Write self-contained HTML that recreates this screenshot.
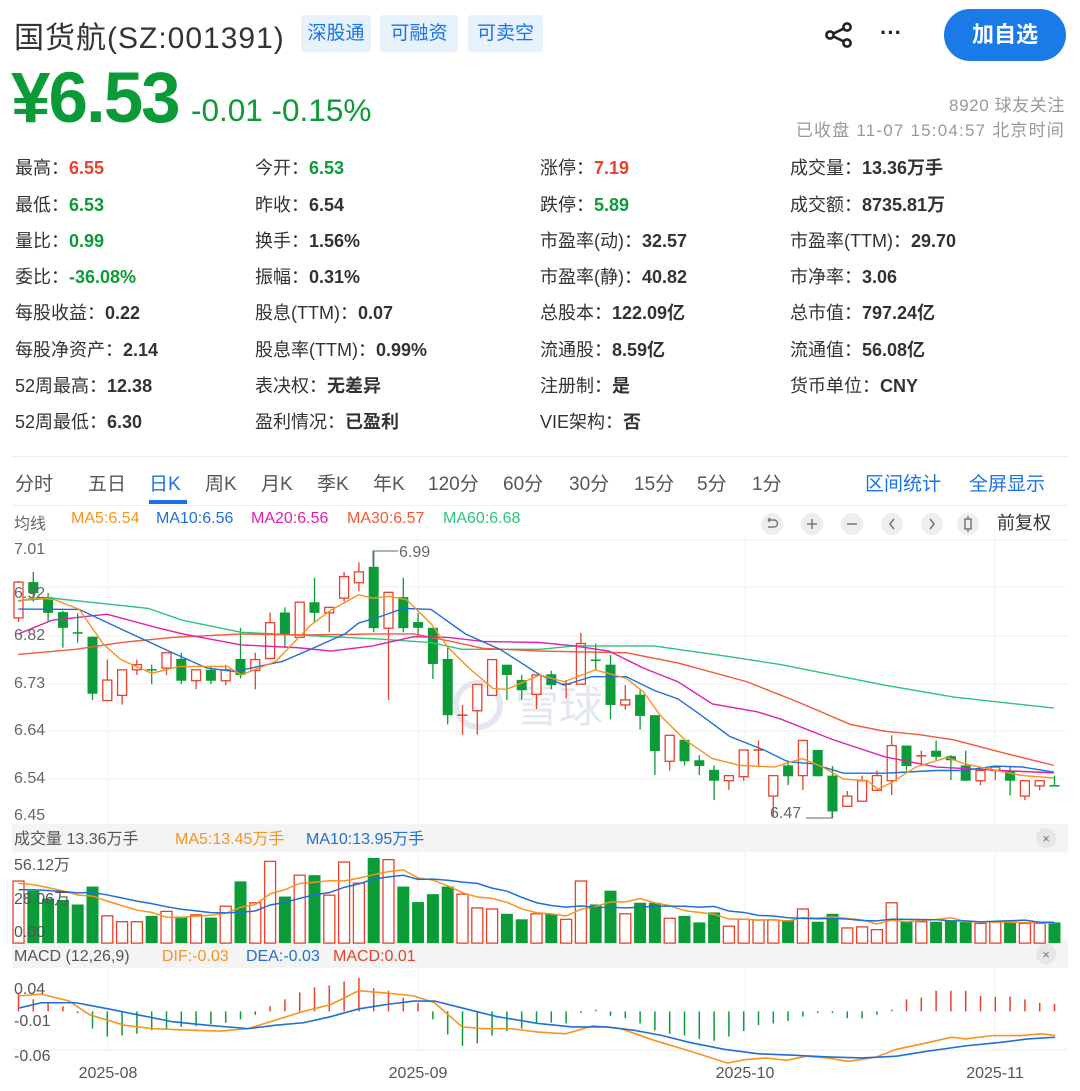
<!DOCTYPE html>
<html><head><meta charset="utf-8">
<style>
*{margin:0;padding:0;box-sizing:border-box}
body{width:1080px;height:1091px;background:#fff;font-family:"Liberation Sans","Noto Sans CJK SC",sans-serif;color:#333;position:relative;overflow:hidden}
.a{position:absolute;white-space:nowrap}
.tag{position:absolute;top:15px;height:37px;background:#e8f2fd;color:#1a73e8;font-size:19px;line-height:37px;text-align:center;border-radius:3px}
.st{position:absolute;font-size:18px;line-height:22px;white-space:nowrap}
.st b{font-weight:bold}
.r{color:#e8412c}.g{color:#0b9b37}
.tab{position:absolute;top:469px;font-size:19px;color:#555}
.leg{position:absolute;top:510px;font-size:16px}
</style></head><body>
<div class="a" style="left:14px;top:13px;font-size:30px;letter-spacing:1px;color:#333">国货航(SZ:001391)</div>
<div class="tag" style="left:301px;width:70px">深股通</div>
<div class="tag" style="left:380px;width:78px">可融资</div>
<div class="tag" style="left:468px;width:75px">可卖空</div>
<svg class="a" style="left:822px;top:20px" width="34" height="30" viewBox="0 0 34 30"><g fill="none" stroke="#222" stroke-width="2.6"><circle cx="25" cy="7" r="3.6"/><circle cx="8" cy="15" r="3.6"/><circle cx="25" cy="23" r="3.6"/><path d="M11.5 13.5 21.5 8.7M11.5 16.5 21.5 21.3"/></g></svg>
<div class="a" style="left:880px;top:20px;font-size:22px;font-weight:bold;color:#222">···</div>
<div class="a" style="left:944px;top:9px;width:122px;height:52px;border-radius:26px;background:#1a7ae8;color:#fff;font-size:22px;font-weight:bold;text-align:center;line-height:52px">加自选</div>
<div class="a" style="left:11px;top:58px;font-size:71px;font-weight:bold;color:#0a9a38;letter-spacing:-2px">¥6.53</div>
<div class="a" style="left:191px;top:92px;font-size:31.5px;color:#0a9a38">-0.01 -0.15%</div>
<div class="a" style="right:15px;top:91px;font-size:17px;letter-spacing:0.6px;color:#999;text-align:right">8920 球友关注</div>
<div class="a" style="right:15px;top:116px;font-size:17px;letter-spacing:1.2px;color:#999;text-align:right">已收盘 11-07 15:04:57 北京时间</div>

<div class="st" style="left:15px;top:157px">最高：<b class="r">6.55</b></div>
<div class="st" style="left:255px;top:157px">今开：<b class="g">6.53</b></div>
<div class="st" style="left:540px;top:157px">涨停：<b class="r">7.19</b></div>
<div class="st" style="left:790px;top:157px">成交量：<b>13.36万手</b></div>
<div class="st" style="left:15px;top:194px">最低：<b class="g">6.53</b></div>
<div class="st" style="left:255px;top:194px">昨收：<b>6.54</b></div>
<div class="st" style="left:540px;top:194px">跌停：<b class="g">5.89</b></div>
<div class="st" style="left:790px;top:194px">成交额：<b>8735.81万</b></div>
<div class="st" style="left:15px;top:230px">量比：<b class="g">0.99</b></div>
<div class="st" style="left:255px;top:230px">换手：<b>1.56%</b></div>
<div class="st" style="left:540px;top:230px">市盈率(动)：<b>32.57</b></div>
<div class="st" style="left:790px;top:230px">市盈率(TTM)：<b>29.70</b></div>
<div class="st" style="left:15px;top:266px">委比：<b class="g">-36.08%</b></div>
<div class="st" style="left:255px;top:266px">振幅：<b>0.31%</b></div>
<div class="st" style="left:540px;top:266px">市盈率(静)：<b>40.82</b></div>
<div class="st" style="left:790px;top:266px">市净率：<b>3.06</b></div>
<div class="st" style="left:15px;top:302px">每股收益：<b>0.22</b></div>
<div class="st" style="left:255px;top:302px">股息(TTM)：<b>0.07</b></div>
<div class="st" style="left:540px;top:302px">总股本：<b>122.09亿</b></div>
<div class="st" style="left:790px;top:302px">总市值：<b>797.24亿</b></div>
<div class="st" style="left:15px;top:339px">每股净资产：<b>2.14</b></div>
<div class="st" style="left:255px;top:339px">股息率(TTM)：<b>0.99%</b></div>
<div class="st" style="left:540px;top:339px">流通股：<b>8.59亿</b></div>
<div class="st" style="left:790px;top:339px">流通值：<b>56.08亿</b></div>
<div class="st" style="left:15px;top:375px">52周最高：<b>12.38</b></div>
<div class="st" style="left:255px;top:375px">表决权：<b>无差异</b></div>
<div class="st" style="left:540px;top:375px">注册制：<b>是</b></div>
<div class="st" style="left:790px;top:375px">货币单位：<b>CNY</b></div>
<div class="st" style="left:15px;top:411px">52周最低：<b>6.30</b></div>
<div class="st" style="left:255px;top:411px">盈利情况：<b>已盈利</b></div>
<div class="st" style="left:540px;top:411px">VIE架构：<b>否</b></div>

<div class="a" style="left:12px;top:456px;width:1056px;height:50px;border-top:1px solid #eee;border-bottom:1px solid #eee"></div>
<div class="tab" style="left:15px">分时</div>
<div class="tab" style="left:88px">五日</div>
<div class="tab" style="left:149px;color:#1a73e8">日K</div>
<div class="a" style="left:149px;top:500px;width:38px;height:4px;background:#1a73e8"></div>
<div class="tab" style="left:205px">周K</div>
<div class="tab" style="left:261px">月K</div>
<div class="tab" style="left:317px">季K</div>
<div class="tab" style="left:373px">年K</div>
<div class="tab" style="left:428px">120分</div>
<div class="tab" style="left:503px">60分</div>
<div class="tab" style="left:569px">30分</div>
<div class="tab" style="left:634px">15分</div>
<div class="tab" style="left:697px">5分</div>
<div class="tab" style="left:752px">1分</div>
<div class="tab" style="left:865px;color:#1a73e8">区间统计</div>
<div class="tab" style="left:969px;color:#1a73e8">全屏显示</div>

<div class="leg" style="left:14px;color:#666">均线</div>
<div class="leg" style="left:71px;color:#f7931e">MA5:6.54</div>
<div class="leg" style="left:156px;color:#1f6fd6">MA10:6.56</div>
<div class="leg" style="left:251px;color:#e020b0">MA20:6.56</div>
<div class="leg" style="left:347px;color:#f25a3a">MA30:6.57</div>
<div class="leg" style="left:443px;color:#2ec47a">MA60:6.68</div>
<svg class="a" style="left:755px;top:510px" width="230" height="28">
<g fill="#eee"><circle cx="17" cy="14" r="11"/><circle cx="57" cy="14" r="11"/><circle cx="97" cy="14" r="11"/><circle cx="137" cy="14" r="11"/><circle cx="177" cy="14" r="11"/><circle cx="213" cy="14" r="11"/></g>
<g fill="none" stroke="#777" stroke-width="1.5"><path d="M13 10h6a3 3 0 0 1 0 7h-6M13 10l2-2M13 10l2 2"/><path d="M52 14h10M57 9v10"/><path d="M92 14h10"/><path d="M139 9l-4 5 4 5"/><path d="M175 9l4 5-4 5"/><rect x="210" y="9" width="6" height="10"/><path d="M213 6v3M213 19v3"/></g></svg>
<div class="leg" style="left:997px;top:509px;font-size:18px;color:#333">前复权</div>

<svg id="ch" class="a" style="left:0;top:0" width="1080" height="1091"></svg>
<script>
var NS="http://www.w3.org/2000/svg",S=document.getElementById('ch');
function el(t,a,txt){var e=document.createElementNS(NS,t);for(var k in a)e.setAttribute(k,a[k]);if(txt)e.textContent=txt;S.appendChild(e);return e;}
var R='#e8412c',G='#0b9b37';
[540,587,636,684,731,779,826].forEach(function(y){el('line',{x1:12,x2:1068,y1:y,y2:y,stroke:'#f0f0f0'})});
[108,418,745,995].forEach(function(x){el('line',{x1:x,x2:x,y1:538,y2:1050,stroke:'#f0f0f0'})});
el('line',{x1:12,x2:1068,y1:1050,y2:1050,stroke:'#eee'});
el('rect',{x:12,y:824,width:1056,height:28,fill:'#f4f4f4'});
el('rect',{x:12,y:940,width:1056,height:28,fill:'#f4f4f4'});
el('circle',{cx:478,cy:705,r:22,fill:'none',stroke:'#e3e8f0','stroke-width':6});
el('text',{x:515,y:722,'font-size':44,fill:'#e3e8f0','font-family':'Noto Sans CJK SC'},'雪球');
var C=[[138,243,135,255,1],[138,170,108,195,0],[182,228,170,255,0],[226,272,222,330,0],[287,287,230,315,0],[298,465,298,483,0],[425,485,365,485,1],[395,470,395,497,1],[380,395,365,410,1],[395,395,380,437,0],[345,390,345,410,1],[363,427,345,437,0],[395,427,395,452,1],[395,427,385,437,0],[395,427,380,440,1],[363,410,272,420,0],[365,397,345,452,1],[257,362,227,362,1],[227,290,212,330,0],[197,300,197,300,1],[197,228,125,255,0],[212,228,212,285,1],[122,185,108,195,1],[108,140,80,165,1],[93,273,48,285,0],[168,273,168,483,1],[182,273,125,285,0],[255,272,228,300,0],[272,378,272,422,0],[363,528,330,555,0],[528,528,498,585,1],[438,515,438,585,1],[365,470,365,470,1],[380,410,380,483,0],[425,455,410,483,0],[410,467,410,510,1],
[408,440,398,452,0],[437,437,425,478,1],[318,437,287,437,1],[367,367,318,397,0],[380,498,352,540,0],[483,498,440,512,1],[468,530,455,570,0],[528,633,528,703,0],[587,663,587,690,1],[600,663,600,675,0],[660,677,645,703,0],[688,720,675,777,0],[705,720,705,747,1],[630,708,630,720,1],[630,630,602,675,1],[705,765,705,825,1],[675,707,660,733,0],[602,705,602,747,1],[630,707,630,707,0],[705,810,677,830,0],[765,795,750,795,1],[720,780,705,780,1],[705,748,690,748,1],[617,720,587,762,1],[617,677,617,690,0],[647,647,632,675,1],[632,650,602,660,0],[648,660,645,718,0],[675,720,632,720,0],[690,720,690,733,1],[680,690,677,718,1],[690,720,677,763,0],[720,765,720,777,1],[720,735,720,748,1],[735,735,705,735,0]];
function cx(i){return 18.5+i*14.8}
function py(z){return 535+z/2.93}
C.forEach(function(c,i){var x=cx(i),col=c[4]?R:G;
 el('line',{x1:x,x2:x,y1:py(c[2]),y2:py(c[3]),stroke:col,'stroke-width':1.3});
 var t=py(c[0]),b=py(c[1]);
 if(b-t<1.5){el('line',{x1:x-5,x2:x+5,y1:t,y2:t,stroke:col,'stroke-width':1.5});}
 else if(c[4])el('rect',{x:x-4.5,y:t,width:9,height:b-t,fill:'#fff',stroke:col,'stroke-width':1.3});
 else el('rect',{x:x-5,y:t,width:10,height:b-t,fill:col});
});
function pl(pts,col,fx,fy,w){el('polyline',{points:pts.map(function(p){return fx(p[0])+','+fy(p[1])}).join(' '),fill:'none',stroke:col,'stroke-width':w||1.4});}
function z4x(x){return x/2.9}
function z5x(x){return 540+x/2.9}
function both(a,b,col){pl(a,col,z4x,py);pl(b,col,z5x,py);}
both([[53,192],[150,185],[430,215],[530,250],[700,285],[900,295],[1100,305],[1250,315],[1340,335],[1566,335]],[[0,335],[100,325],[330,325],[540,355],[700,380],[800,400],[1000,440],[1200,475],[1490,507]],'#2ec47a');
both([[53,350],[220,335],[350,315],[500,300],[700,290],[900,293],[1100,290],[1200,290],[1300,310],[1400,332],[1566,340]],[[0,340],[250,345],[400,375],[600,430],[750,490],[900,555],[1000,575],[1100,585],[1200,600],[1350,640],[1490,675]],'#f25a3a');
both([[53,290],[150,250],[310,232],[450,270],[530,290],[700,322],[860,330],[960,340],[1080,325],[1200,298],[1300,300],[1400,312],[1566,315]],[[0,315],[100,325],[200,340],[300,390],[400,430],[500,495],[630,518],[700,540],[850,600],[1000,650],[1150,680],[1300,688],[1490,697]],'#e020b0');
both([[53,217],[230,218],[350,275],[500,345],[600,390],[680,400],[820,370],[900,335],[1000,290],[1040,258],[1100,240],[1170,215],[1250,218],[1350,290],[1450,335],[1566,410]],[[0,410],[70,440],[150,415],[250,415],[330,455],[400,480],[470,530],[550,590],[650,630],[720,665],[790,670],[880,698],[1000,698],[1150,690],[1230,690],[1320,677],[1400,680],[1490,695]],'#1f6fd6');
both([[53,195],[100,183],[160,190],[230,218],[300,320],[350,365],[440,405],[520,385],[660,385],[700,410],[800,370],[900,265],[960,220],[1040,175],[1080,185],[1130,180],[1180,190],[1250,260],[1300,330],[1360,390],[1430,450],[1470,452],[1566,410]],[[0,410],[70,430],[160,395],[250,420],[300,460],[350,530],[420,600],[500,655],[580,675],[680,680],[760,655],[820,680],[880,715],[950,720],[980,745],[1020,725],[1090,680],[1180,652],[1230,670],[1300,685],[1400,705],[1490,712]],'#f7931e');
var lab=[['7.01',554],['6.82',597],['6.82',640],['6.73',688],['6.64',735],['6.54',783],['6.45',820]];
lab.forEach(function(l,i){if(i==1)return;el('text',{x:14,y:l[1],'font-size':16,fill:'#666'},l[0])});
el('text',{x:14,y:598,'font-size':16,fill:'#666'},'6.92');
el('path',{d:'M373 566V551H398',fill:'none',stroke:'#666'});
el('text',{x:399,y:557,'font-size':16,fill:'#666'},'6.99');
el('path',{d:'M832 810V818H806',fill:'none',stroke:'#666'});
el('text',{x:770,y:818,'font-size':16,fill:'#666'},'6.47');
var V=[177,205,228,232,245,193,278,295,295,278,265,280,275,283,250,178,240,120,222,160,160,218,122,183,110,115,193,238,215,193,215,255,258,272,288,272,272,288,177,245,205,272,240,240,285,278,297,268,308,288,290,290,290,258,295,272,313,310,318,240,295,295,295,292,296,300,296,296,300,300,297];
function vy(z){return 820+z/2.9}
var vb=vy(357);
V.forEach(function(z,i){var x=cx(i),t=vy(z);if(C[i][4])el('rect',{x:x-5.5,y:t,width:11,height:vb-t,fill:'#fff',stroke:R,'stroke-width':1.3});else el('rect',{x:x-6,y:t,width:12,height:vb-t,fill:G});});
function ma(n,pad){var o=[];for(var i=0;i<V.length;i++){var s=0;for(var k=i-n+1;k<=i;k++)s+=(k<0?pad:V[k]);o.push([cx(i),vy(s/n)]);}return o;}
function plr(pts,col){el('polyline',{points:pts.map(function(p){return p[0]+','+p[1]}).join(' '),fill:'none',stroke:col,'stroke-width':1.5});}
plr(ma(5,185),'#f7931e');plr(ma(10,205),'#1f6fd6');
el('text',{x:14,y:870,'font-size':16,fill:'#555'},'56.12万');
el('text',{x:14,y:904,'font-size':16,fill:'#555'},'28.06万');
el('text',{x:14,y:937,'font-size':16,fill:'#555'},'0.00');
var M=[505,520,530,540,560,605,628,625,620,610,605,600,598,592,588,578,565,540,520,500,485,480,468,458,488,495,515,530,578,622,655,648,625,612,605,590,588,590,560,550,568,575,590,610,620,625,635,640,628,612,595,590,583,570,560,560,575,575,565,550,520,515,495,495,495,510,513,512,520,530,533];
var zero=vy(555);
M.forEach(function(z,i){var x=cx(i),y=vy(z);el('line',{x1:x,x2:x,y1:zero,y2:y,stroke:z<555?R:G,'stroke-width':1.5});});
function z3x(x){return x/1.45}
pl([[28,510],[60,505],[100,525],[130,565],[180,595],[220,605],[280,610],[320,612],[360,605],[400,580],[440,555],[480,535],[520,495],[560,502],[600,510],[630,530],[670,600],[700,605],[740,605],[780,615],[820,620],[860,597],[900,605],[950,640],[1000,670],[1055,705],[1080,695],[1110,690],[1140,697],[1170,685],[1200,690],[1230,700],[1270,688],[1300,665],[1340,648],[1380,630],[1400,635],[1440,625],[1480,625],[1510,620],[1530,625]],'#f7931e',z3x,vy,1.6);
pl([[28,545],[60,530],[110,530],[150,545],[200,565],[250,585],[300,595],[360,605],[400,595],[440,588],[480,570],[520,548],[560,535],[600,525],[630,525],[670,545],[720,570],[780,590],[830,600],[880,600],[920,610],[960,625],[1000,645],[1050,665],[1100,678],[1150,682],[1200,687],[1250,690],[1300,685],[1340,672],[1400,655],[1450,645],[1490,635],[1530,630]],'#1f6fd6',z3x,vy,1.6);
el('text',{x:14,y:994,'font-size':16,fill:'#555'},'0.04');
el('text',{x:14,y:1026,'font-size':16,fill:'#555'},'-0.01');
el('text',{x:14,y:1061,'font-size':16,fill:'#555'},'-0.06');
[['2025-08',108],['2025-09',418],['2025-10',745],['2025-11',995]].forEach(function(d){el('text',{x:d[1],y:1078,'font-size':16,fill:'#555','text-anchor':'middle'},d[0])});
function bt(x,y,c,t){el('text',{x:x,y:y,'font-size':16,fill:c},t)}
bt(14,844,'#555','成交量 13.36万手');bt(175,844,'#f7931e','MA5:13.45万手');bt(306,844,'#1f6fd6','MA10:13.95万手');
bt(14,961,'#555','MACD (12,26,9)');bt(162,961,'#f7931e','DIF:-0.03');bt(246,961,'#1f6fd6','DEA:-0.03');bt(333,961,'#e8412c','MACD:0.01');
[838,954].forEach(function(y){el('circle',{cx:1046,cy:y,r:10,fill:'#e6e6e6'});el('text',{x:1046,y:y+5,'font-size':13,fill:'#777','text-anchor':'middle'},'×')});
</script>
</body></html>
